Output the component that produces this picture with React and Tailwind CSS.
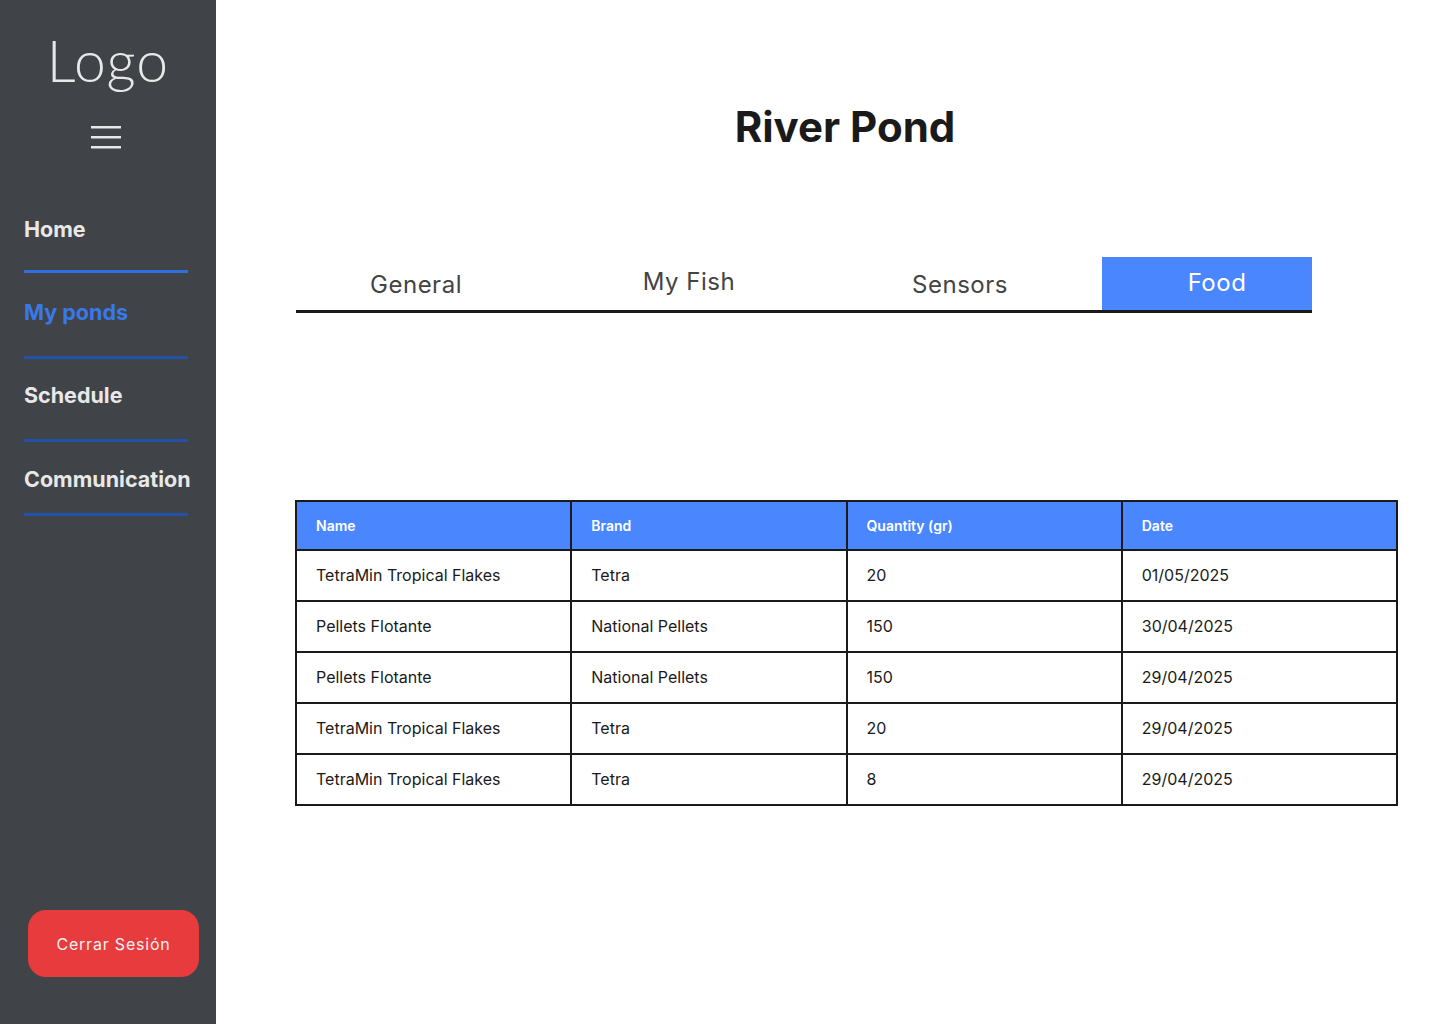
const rows = [
  { name: 'TetraMin Tropical Flakes', brand: 'Tetra', qty: '20', date: '01/05/2025' },
  { name: 'Pellets Flotante', brand: 'National Pellets', qty: '150', date: '30/04/2025' },
  { name: 'Pellets Flotante', brand: 'National Pellets', qty: '150', date: '29/04/2025' },
  { name: 'TetraMin Tropical Flakes', brand: 'Tetra', qty: '20', date: '29/04/2025' },
  { name: 'TetraMin Tropical Flakes', brand: 'Tetra', qty: '8', date: '29/04/2025' },
]

const Sidebar = () => {
  return (
    <aside className="flex h-screen w-[216px] shrink-0 flex-col bg-[#404347] font-['Inter',sans-serif]">
      <div className="mt-[28px] text-center font-['Lato',sans-serif] text-[57px] font-light leading-[64px] tracking-[1px] text-[#e8e8e8]">
        Logo
      </div>
      <div className="mt-[33px] flex justify-center">
        <svg width="32" height="24" viewBox="0 0 32 24" className="ml-[-4px]">
          <rect x="1" y="1" width="30" height="2.5" fill="#e8e8e8" />
          <rect x="1" y="11" width="30" height="2.5" fill="#e8e8e8" />
          <rect x="1" y="21" width="30" height="2.5" fill="#e8e8e8" />
        </svg>
      </div>
      <nav className="mt-[68px] px-6">
        <div className="text-[21.5px] font-bold leading-6 text-[#e8e8e8]">Home</div>
        <div className="mt-[29px] h-[3px] w-[164px] bg-[#2f6fe0]" />
        <div className="mt-[27px] text-[21.5px] font-bold leading-6 text-[#3b78e7]">My ponds</div>
        <div className="mt-[32px] h-[3px] w-[164px] bg-[#2451a8]" />
        <div className="mt-[24px] text-[21.5px] font-bold leading-6 text-[#e8e8e8]">Schedule</div>
        <div className="mt-[32px] h-[3px] w-[164px] bg-[#2451a8]" />
        <div className="mt-[25px] whitespace-nowrap text-[21.5px] font-bold leading-6 text-[#e8e8e8]">
          Communication
        </div>
        <div className="mt-[22px] h-[3px] w-[164px] bg-[#2451a8]" />
      </nav>
      <div className="mt-auto mb-[47px] pl-[28px]">
        <button className="h-[67px] w-[171px] rounded-[18px] bg-[#e83b3d] text-[16px] tracking-[0.8px] text-[#f2f2f2]">
          Cerrar Sesión
        </button>
      </div>
    </aside>
  )
}

const Tabs = () => {
  return (
    <div className="flex h-[56px] w-[1016px] items-stretch border-b-[3px] border-[#1a1a1a] font-['Inter',sans-serif] text-[24px] tracking-[0.5px] text-[#444444]">
      <div className="flex w-[240px] items-end justify-center pb-[7px]">General</div>
      <div className="flex w-[306px] items-end justify-center pb-[10px]">My Fish</div>
      <div className="flex w-[236px] items-end justify-center pb-[7px]">Sensors</div>
      <div className="ml-[24px] flex w-[210px] items-center justify-center bg-[#4a87ff] pl-5 pb-[2px] text-white">
        Food
      </div>
    </div>
  )
}

const FoodTable = () => {
  return (
    <table className="ml-[-1px] w-[1103px] table-fixed border-collapse font-['Inter',sans-serif] text-[#1a1a1a]">
      <thead>
        <tr className="h-[49px] bg-[#4a87ff] text-left text-[14px] text-white">
          <th className="border-2 border-[#1a1a1a] pl-[19px] font-semibold">Name</th>
          <th className="border-2 border-[#1a1a1a] pl-[19px] font-semibold">Brand</th>
          <th className="border-2 border-[#1a1a1a] pl-[19px] font-semibold">Quantity (gr)</th>
          <th className="border-2 border-[#1a1a1a] pl-[19px] font-semibold">Date</th>
        </tr>
      </thead>
      <tbody>
        {rows.map((r, i) => (
          <tr key={i} className="h-[51px] text-[16px]">
            <td className="border-2 border-[#1a1a1a] pl-[19px] pb-[1px]">{r.name}</td>
            <td className="border-2 border-[#1a1a1a] pl-[19px] pb-[1px]">{r.brand}</td>
            <td className="border-2 border-[#1a1a1a] pl-[19px] pb-[1px]">{r.qty}</td>
            <td className="border-2 border-[#1a1a1a] pl-[19px] pb-[1px]">{r.date}</td>
          </tr>
        ))}
      </tbody>
    </table>
  )
}

const App = () => {
  return (
    <div className="flex min-h-screen bg-white">
      <Sidebar />
      <main className="flex-1 pl-[80px]">
        <h1 className="mt-[102px] w-[1016px] pl-[82px] text-center font-['Inter',sans-serif] text-[42px] font-bold leading-[50px] text-[#1a1a1a]">
          River Pond
        </h1>
        <div className="mt-[105px]">
          <Tabs />
        </div>
        <div className="mt-[187px]">
          <FoodTable />
        </div>
      </main>
    </div>
  )
}

export default App
